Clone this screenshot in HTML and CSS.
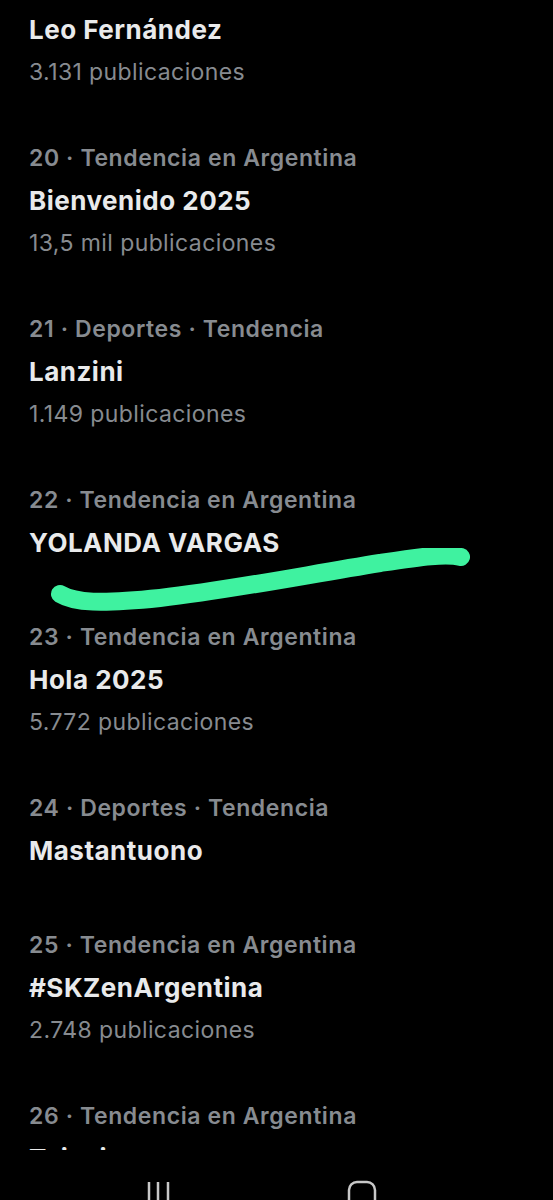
FILE: index.html
```html
<!DOCTYPE html>
<html lang="es">
<head>
  <meta charset="UTF-8" />
  <meta name="viewport" content="width=device-width, initial-scale=1.0"/>
  <title>Tendencias</title>
  <link rel="stylesheet" href="styles.css">
</head>
<body>
  <div class="screen">
    <ul class="trends">
      <li class="trend first">
        <div class="meta">19 · Tendencia en Argentina</div>
        <div class="name">Leo Fernández</div>
        <div class="count">3.131 publicaciones</div>
      </li>
      <li class="trend">
        <div class="meta">20 · Tendencia en Argentina</div>
        <div class="name">Bienvenido 2025</div>
        <div class="count">13,5 mil publicaciones</div>
      </li>
      <li class="trend">
        <div class="meta">21 · Deportes · Tendencia</div>
        <div class="name">Lanzini</div>
        <div class="count">1.149 publicaciones</div>
      </li>
      <li class="trend no-count">
        <div class="meta">22 · Tendencia en Argentina</div>
        <div class="name">YOLANDA VARGAS</div>
        <svg class="scribble" width="553" height="80" viewBox="0 0 553 80">
          <path d="M60 46 C 75 55, 100 56, 160 50 C 230 42, 300 28, 380 15 C 420 9, 446 5, 461 9" />
        </svg>
      </li>
      <li class="trend">
        <div class="meta">23 · Tendencia en Argentina</div>
        <div class="name">Hola 2025</div>
        <div class="count">5.772 publicaciones</div>
      </li>
      <li class="trend no-count">
        <div class="meta">24 · Deportes · Tendencia</div>
        <div class="name">Mastantuono</div>
      </li>
      <li class="trend">
        <div class="meta">25 · Tendencia en Argentina</div>
        <div class="name">#SKZenArgentina</div>
        <div class="count">2.748 publicaciones</div>
      </li>
      <li class="trend">
        <div class="meta">26 · Tendencia en Argentina</div>
        <div class="name">Teixeira</div>
      </li>
    </ul>

    <div class="navbar">
      <svg class="nav-icon" width="26" height="20" viewBox="0 0 26 20">
        <path d="M3 2 V22 M12 2 V22 M22 2 V22" />
      </svg>
      <svg class="nav-icon" width="30" height="20" viewBox="0 0 30 20">
        <rect x="2" y="2" width="26" height="30" rx="8" />
      </svg>
    </div>
  </div>
</body>
</html>
```

FILE: styles.css
```css
body {
  margin: 0;
  background: #000;
  font-family: "Inter", "Liberation Sans", sans-serif;
}
.screen {
  position: relative;
  width: 553px;
  height: 1200px;
  overflow: hidden;
  background: #000;
}
.trends {
  list-style: none;
  margin: 0;
  padding: 0 0 0 29px;
  margin-top: -35px;
}
.trend {
  position: relative;
  padding-bottom: 43px;
}
.trend.no-count {
  padding-bottom: 51px;
}
.meta {
  color: #878b90;
  font-size: 23px;
  font-weight: 600;
  letter-spacing: 0.6px;
  line-height: 44px;
}
.name {
  color: #e9eaeb;
  font-size: 26px;
  font-weight: 700;
  letter-spacing: 0.5px;
  line-height: 42px;
}
.count {
  color: #878b90;
  font-size: 23px;
  letter-spacing: 0.4px;
  line-height: 42px;
}
.scribble {
  position: absolute;
  left: -29px;
  top: 70px;
}
.scribble path {
  fill: none;
  stroke: #3ff2a0;
  stroke-width: 18;
  stroke-linecap: round;
}
.navbar {
  position: absolute;
  left: 0;
  right: 0;
  top: 1150px;
  height: 50px;
  background: #000;
  display: flex;
  align-items: flex-end;
  gap: 175px;
  padding-left: 146px;
}
.nav-icon {
  stroke: #c8c8c8;
  stroke-width: 2.5;
  fill: none;
}
```
